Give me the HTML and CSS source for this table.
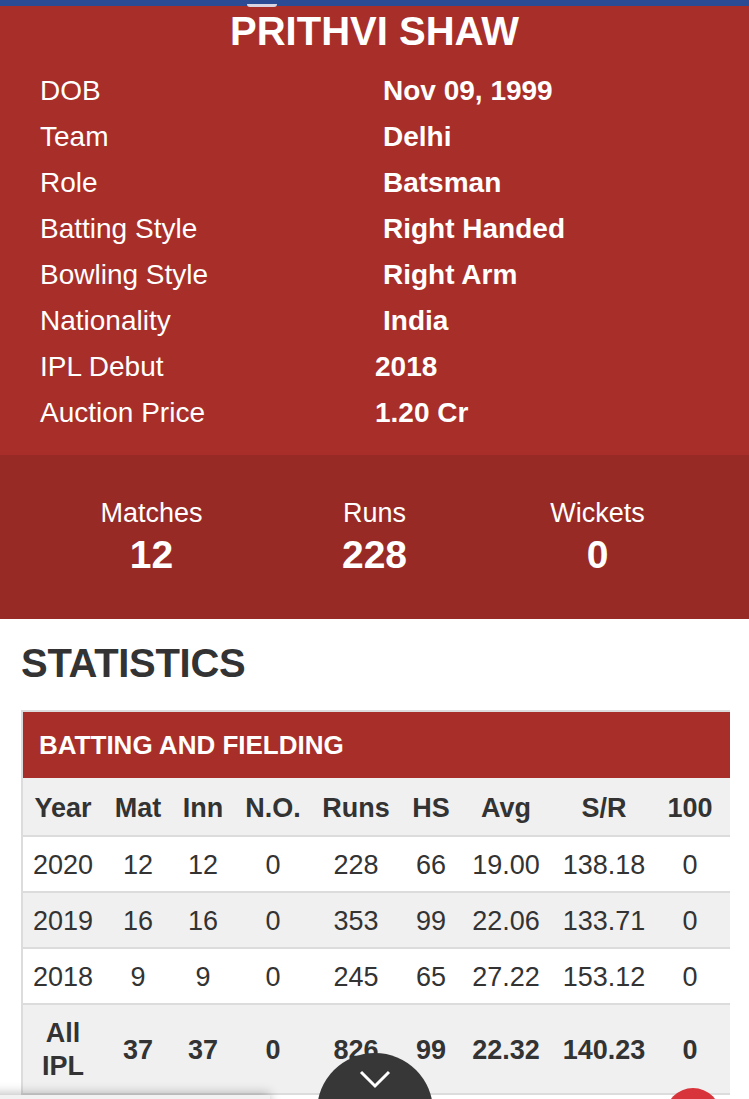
FILE: index.html
```html
<!DOCTYPE html>
<html lang="en">
<head>
    <meta charset="UTF-8">
    <meta name="viewport" content="width=device-width, initial-scale=1.0">
    <title>Prithvi Shaw - Player Profile</title>
    <link rel="stylesheet" href="styles.css">
</head>
<body>
    <div class="top-bar"></div>

    <section class="profile">
        <h1>PRITHVI SHAW</h1>
        <div class="info">
            <div class="info-row"><span class="label">DOB</span><span class="value">Nov 09, 1999</span></div>
            <div class="info-row"><span class="label">Team</span><span class="value">Delhi</span></div>
            <div class="info-row"><span class="label">Role</span><span class="value">Batsman</span></div>
            <div class="info-row"><span class="label">Batting Style</span><span class="value">Right Handed</span></div>
            <div class="info-row"><span class="label">Bowling Style</span><span class="value">Right Arm</span></div>
            <div class="info-row"><span class="label">Nationality</span><span class="value">India</span></div>
            <div class="info-row"><span class="label">IPL Debut</span><span class="value shifted">2018</span></div>
            <div class="info-row"><span class="label">Auction Price</span><span class="value shifted">1.20 Cr</span></div>
        </div>
    </section>

    <section class="summary">
        <div class="summary-item">
            <span class="summary-label">Matches</span>
            <span class="summary-num">12</span>
        </div>
        <div class="summary-item">
            <span class="summary-label">Runs</span>
            <span class="summary-num">228</span>
        </div>
        <div class="summary-item">
            <span class="summary-label">Wickets</span>
            <span class="summary-num">0</span>
        </div>
    </section>

    <h2 class="section-title">STATISTICS</h2>

    <div class="stats-box">
        <div class="stats-caption">BATTING AND FIELDING</div>
        <table class="stats-table">
            <colgroup>
                <col class="c-year">
                <col class="c-mat">
                <col class="c-inn">
                <col class="c-no">
                <col class="c-runs">
                <col class="c-hs">
                <col class="c-avg">
                <col class="c-sr">
                <col class="c-100">
            </colgroup>
            <thead>
                <tr>
                    <th>Year</th><th>Mat</th><th>Inn</th><th>N.O.</th><th>Runs</th><th>HS</th><th>Avg</th><th>S/R</th><th>100</th>
                </tr>
            </thead>
            <tbody>
                <tr>
                    <td>2020</td><td>12</td><td>12</td><td>0</td><td>228</td><td>66</td><td>19.00</td><td>138.18</td><td>0</td>
                </tr>
                <tr class="alt">
                    <td>2019</td><td>16</td><td>16</td><td>0</td><td>353</td><td>99</td><td>22.06</td><td>133.71</td><td>0</td>
                </tr>
                <tr>
                    <td>2018</td><td>9</td><td>9</td><td>0</td><td>245</td><td>65</td><td>27.22</td><td>153.12</td><td>0</td>
                </tr>
                <tr class="alt total">
                    <td>All<br>IPL</td><td>37</td><td>37</td><td>0</td><td>826</td><td>99</td><td>22.32</td><td>140.23</td><td>0</td>
                </tr>
            </tbody>
        </table>
    </div>

    <div class="bottom-card"></div>
    <button class="scroll-btn" aria-label="Scroll down">
        <svg width="34" height="20" viewBox="0 0 34 20"><path d="M3 3 L17 17 L31 3" fill="none" stroke="#fff" stroke-width="3"/></svg>
    </button>
    <div class="fab"></div>
</body>
</html>
```

FILE: styles.css
```css
body {
    margin: 0;
    padding: 0;
    font-family: 'Liberation Sans', Arial, sans-serif;
    color: #333;
    background: #fff;
    width: 749px;
    overflow: hidden;
}

.top-bar {
    height: 6px;
    background-color: #2c4b95;
    position: relative;
}

.top-bar::after {
    content: '';
    position: absolute;
    left: 247px;
    top: 4px;
    width: 30px;
    height: 3px;
    border-radius: 0 0 15px 15px;
    background: #d9d4e2;
}

.profile {
    background-color: #a82e29;
    color: #fff;
    padding: 3px 0 20px;
}

.profile h1 {
    margin: 0;
    font-size: 40px;
    line-height: 44px;
    font-weight: bold;
    text-align: center;
}

.info {
    margin-top: 14px;
    padding-left: 40px;
}

.info-row {
    display: grid;
    grid-template-columns: 343px 1fr;
    height: 46px;
    line-height: 48px;
    font-size: 28px;
}

.value {
    font-weight: bold;
}

.value.shifted {
    margin-left: -8px;
}

.summary {
    background-color: #982a26;
    color: #fff;
    display: grid;
    grid-template-columns: repeat(3, 1fr);
    padding: 42px 40px 42px;
}

.summary-item {
    display: flex;
    flex-direction: column;
    align-items: center;
}

.summary-label {
    font-size: 27px;
    line-height: 32px;
}

.summary-num {
    margin-top: 4px;
    font-size: 39px;
    line-height: 44px;
    font-weight: bold;
}

.section-title {
    margin: 20px 0 23px 21px;
    font-size: 40px;
    line-height: 48px;
    font-weight: bold;
    color: #333;
    letter-spacing: -0.3px;
}

.stats-box {
    margin-left: 21px;
    width: 707px;
    border-left: 2px solid #dcdcdc;
    border-top: 2px solid #dcdcdc;
    overflow: hidden;
}

.stats-caption {
    height: 66px;
    line-height: 66px;
    padding-left: 16px;
    background-color: #a82e29;
    color: #fff;
    font-size: 26px;
    font-weight: bold;
}

.stats-table {
    border-collapse: collapse;
    table-layout: fixed;
    width: 707px;
    font-size: 27px;
    color: #333;
}

.c-year { width: 80px; }
.c-mat { width: 70px; }
.c-inn { width: 60px; }
.c-no { width: 80px; }
.c-runs { width: 86px; }
.c-hs { width: 64px; }
.c-avg { width: 86px; }
.c-sr { width: 110px; }
.c-100 { width: 71px; }

.stats-table th,
.stats-table td {
    padding: 0;
    text-align: center;
    white-space: nowrap;
}

.stats-table th:last-child,
.stats-table td:last-child {
    padding-right: 9px;
}

.stats-table thead tr {
    background-color: #f0f0f1;
    height: 58px;
    border-bottom: 2px solid #dcdcdc;
}

.stats-table th {
    font-weight: bold;
    padding-top: 4px;
}

.stats-table tbody tr {
    height: 56px;
    border-bottom: 2px solid #dcdcdc;
}

.stats-table td {
    padding-top: 2px;
}

.stats-table tbody tr.alt {
    background-color: #f0f0f1;
}

.stats-table tr.total {
    height: 90px;
    font-weight: bold;
}

.stats-table tr.total td:first-child {
    line-height: 33px;
}

.bottom-card {
    position: fixed;
    left: -10px;
    top: 1095px;
    width: 280px;
    height: 40px;
    background: #f2f2f2;
    box-shadow: 0 -2px 10px rgba(0, 0, 0, 0.25);
}

.scroll-btn {
    position: fixed;
    left: 317px;
    top: 1053px;
    width: 116px;
    height: 116px;
    border: none;
    border-radius: 50%;
    background-color: #373737;
    padding: 16px 0 0;
    display: flex;
    justify-content: center;
    align-items: flex-start;
}

.fab {
    position: fixed;
    left: 665px;
    top: 1088px;
    width: 56px;
    height: 56px;
    border-radius: 50%;
    background-color: #d8343b;
}
```
